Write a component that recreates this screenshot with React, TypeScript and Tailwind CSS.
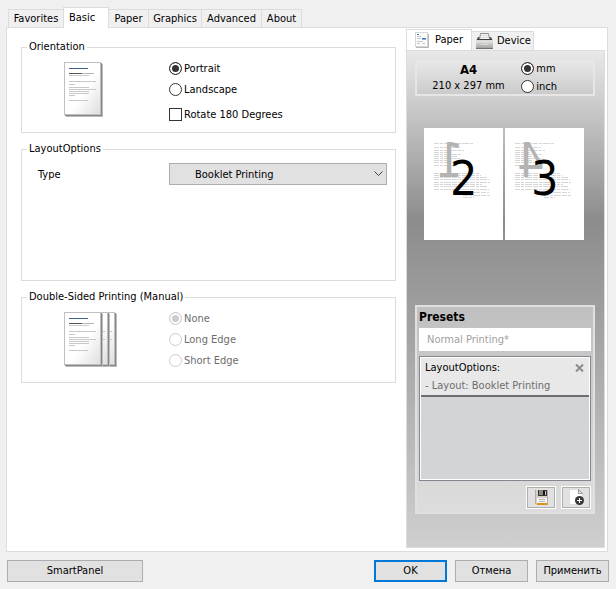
import { useState, type ReactNode } from "react";

const radioClass =
  "m-0 size-[13px] shrink-0 appearance-none rounded-full border border-[#333333] bg-white checked:bg-[#333333] checked:shadow-[inset_0_0_0_2px_white] disabled:border-[#cccccc] disabled:checked:bg-[#cccccc]";

function Radio({ name, label, checked, disabled, onChange }: {
  name: string;
  label: string;
  checked: boolean;
  disabled?: boolean;
  onChange?: () => void;
}) {
  return (
    <label className={`flex h-[21px] items-center gap-0.5 ${disabled ? "text-[#6d6d6d]" : ""}`}>
      <input type="radio" name={name} checked={checked} disabled={disabled} onChange={() => onChange?.()} className={radioClass} />
      {label}
    </label>
  );
}

function Group({ title, className, children }: { title: string; className: string; children: ReactNode }) {
  return (
    <fieldset className={`min-w-0 border border-[#dcdcdc] ${className}`}>
      <legend className="ml-[5px] px-0.5 leading-4">{title}</legend>
      {children}
    </fieldset>
  );
}

const sheetLines: [number, number][] = [
  [19, 27], [22, 6], [25, 20], [27, 27], [29, 20], [31, 20], [33, 6], [38, 19],
];

function SheetIcon({ stacked }: { stacked?: boolean }) {
  return (
    <svg width="54" height="57" viewBox="0 0 54 57" aria-hidden="true">
      <defs>
        <linearGradient id="sheet" x1="0" y1="0" x2="1" y2="1">
          <stop offset="0.55" stopColor="#ffffff" />
          <stop offset="1" stopColor="#dedede" />
        </linearGradient>
      </defs>
      {(stacked ? [14, 7, 0] : [0]).map((dx) => (
        <g key={dx}>
          <rect x={dx + 2} y="2" width="37" height="53" fill="#bdbdbd" />
          <rect x={dx + 1} y="1" width="37" height="53" fill="#858585" />
          <rect x={dx + 0.5} y="0.5" width="36" height="52" fill="url(#sheet)" stroke="#c0c0c0" />
          {dx > 0 && <path d={`M${dx + 31} 19.500h3m-3 8h3`} stroke="#c8c8c8" />}
        </g>
      ))}
      <rect x="5" y="6" width="19" height="1" fill="#3c6291" />
      <rect x="5" y="11" width="13" height="1" fill="#555555" />
      <rect x="18" y="11" width="12" height="1" fill="#b5b5b5" />
      <rect x="5" y="13" width="20" height="1" fill="#cccccc" />
      {sheetLines.map(([y, w]) => (
        <rect key={y} x="5" y={y} width={w} height="1" fill="#c8c8c8" />
      ))}
    </svg>
  );
}

function PaperIcon() {
  return (
    <svg width="14" height="16" viewBox="0 0 14 16" aria-hidden="true">
      <rect x="0.5" y="0.5" width="12" height="14" fill="#fbfbfb" stroke="#d6d6d6" />
      <path d="M13.5 2v13.5H1" fill="none" stroke="#b5b5b5" />
      <path d="M2 2.5h2M7 6.5h4" stroke="#3f78bd" />
      <path d="M2 4.5h4M2 6.5h4M2 9.5h6M2 11.5h3M7 11.5h3" stroke="#c3c8d0" />
      <path d="M7 7.5h4" stroke="#8db0da" />
    </svg>
  );
}

function PrinterIcon() {
  return (
    <svg width="17" height="16" viewBox="0 0 17 16" aria-hidden="true">
      <defs>
        <linearGradient id="printer" x1="0" y1="0" x2="0" y2="1">
          <stop offset="0" stopColor="#eeeeeb" />
          <stop offset="1" stopColor="#a3a29e" />
        </linearGradient>
      </defs>
      <path d="M2 4h13l2 4H0z" fill="#555555" />
      <path d="M4.500.500h8l1 6h-10z" fill="#f4f4f4" stroke="#8f8f8f" />
      <path d="M5 2.500h7M5 4.500h7" stroke="#dedede" />
      <path d="M1 6.500h15" stroke="#3e3e3e" />
      <rect x="0" y="7" width="17" height="8" fill="url(#printer)" />
      <path d="M0 7.500h17M5 11.500h7" stroke="#d9d9d6" />
      <path d="M0 15.500h17" stroke="#75726c" />
    </svg>
  );
}

function FloppyIcon() {
  return (
    <svg width="15" height="15" viewBox="0 0 15 15" aria-hidden="true">
      <path d="M1 0h13v15H2l-1-1z" fill="#d6cfc8" />
      <rect x="4" y="0" width="9" height="6" fill="#3a3735" />
      <rect x="5" y="0" width="4" height="5" fill="#8b8783" />
      <rect x="9" y="1" width="2" height="4" fill="#17130f" />
      <rect x="11" y="1" width="1" height="4" fill="#c9c4bf" />
      <rect x="3" y="8" width="10" height="5" fill="#f6f5f3" />
      <path d="M5 9.500h6M5 11.500h6" stroke="#bab7b3" />
      <rect x="3" y="13" width="10" height="2" fill="#d89416" />
      <path d="M1.500 0v14M13.500 0v15" stroke="#b4aca4" />
    </svg>
  );
}

function NewPresetIcon() {
  return (
    <svg width="15" height="17" viewBox="0 0 15 17" aria-hidden="true">
      <path d="M.5.5h9l4 4v11H.5z" fill="#ffffff" stroke="#dddddd" />
      <path d="M9.500.500v4h4z" fill="#eeeeee" stroke="#999999" />
      <circle cx="10.500" cy="11.500" r="4.500" fill="#383838" />
      <path d="M10.500 9v5M8 11.500h5" stroke="#ffffff" />
    </svg>
  );
}

const bodyLines: [number, number, number][] = [
  [10, 15, 39], [10, 19, 26], [10, 22, 30], [10, 24, 15], [10, 26, 28], [10, 28, 24], [10, 30, 26], [10, 32, 18], [10, 34, 27],
  [10, 37, 24], [10, 45, 45], [10, 47, 47], [10, 49, 53], [10, 51, 55], [10, 54, 56], [10, 56, 48], [10, 58, 54], [10, 61, 55],
  [39, 64, 26], [39, 67, 28], [39, 69, 11],
];

function PreviewPage({ back, front }: { back: string; front: string }) {
  return (
    <div className="relative h-28 w-[79px] bg-white">
      <svg width="79" height="112" viewBox="0 0 79 112" aria-hidden="true">
        {bodyLines.map(([x, y, w]) => (
          <path key={y} d={`M${x} ${y + 0.5}h${w}`} stroke="#d6d6d6" strokeDasharray="5 1 3 1 7 1" />
        ))}
      </svg>
      <span className="absolute left-3 top-1.5 -scale-x-100 text-5xl leading-[52px] text-[#b3b3b3]">{back}</span>
      <span className="absolute left-[26px] top-6 text-5xl leading-[52px] text-black">{front}</span>
    </div>
  );
}

const tabs = [
  { name: "Favorites", width: "w-[55px]" },
  { name: "Basic", width: "w-[46px]" },
  { name: "Paper", width: "w-10" },
  { name: "Graphics", width: "w-[53px]" },
  { name: "Advanced", width: "w-[60px]" },
  { name: "About", width: "w-10" },
];

const pushButton = "h-[22px] border border-[#adadad] bg-[#e1e1e1] text-center";

export default function App() {
  const [orientation, setOrientation] = useState("Portrait");
  const [unit, setUnit] = useState("mm");
  return (
    <main className="flex min-h-screen flex-col bg-[#f0f0f0] px-1.5 pt-[7px] font-['DejaVu_Sans_Condensed','DejaVu_Sans',sans-serif] text-[11px] leading-[14px] text-black">
      <div role="tablist" className="flex items-end pl-0.5">
        {tabs.map(({ name, width }) =>
          name === "Basic" ? (
            <button key={name} role="tab" aria-selected="true" className={`z-10 -mb-px h-[21px] border border-b-0 border-[#dcdcdc] bg-white pr-2 ${width}`}>
              {name}
            </button>
          ) : (
            <button key={name} role="tab" aria-selected="false" className={`h-[18px] whitespace-nowrap border border-b-0 border-l-0 border-[#dcdcdc] first:border-l first:border-r-0 ${width}`}>
              {name}
            </button>
          ),
        )}
      </div>

      <section className="mr-0.5 flex border border-[#dcdcdc] bg-white">
        <div className="flex flex-1 flex-col gap-2 pl-3.5 pr-2.5 pt-[11px]">
          <Group title="Orientation" className="pb-[7px]">
            <div className="grid grid-cols-[105px_1fr] pl-[42px] pt-[3px]">
              <div className="pt-1">
                <SheetIcon />
              </div>
              <div>
                <Radio name="orientation" label="Portrait" checked={orientation === "Portrait"} onChange={() => setOrientation("Portrait")} />
                <Radio name="orientation" label="Landscape" checked={orientation === "Landscape"} onChange={() => setOrientation("Landscape")} />
                <label className="mt-1 flex h-[21px] items-center gap-0.5">
                  <input type="checkbox" className="size-[13px] appearance-none border border-[#333333] bg-white checked:bg-[#333333] checked:shadow-[inset_0_0_0_2px_white]" />
                  Rotate 180 Degrees
                </label>
              </div>
            </div>
          </Group>

          <Group title="LayoutOptions" className="min-h-[140px]">
            <div className="flex items-center pl-4 pr-2 pt-1.5">
              <label htmlFor="type" className="w-[131px] pt-0.5">Type</label>
              <div className="relative flex-1">
                <select id="type" className="h-[22px] w-full appearance-none border border-[#adadad] bg-[#e1e1e1] pl-[25px] pt-0.5">
                  <option>Booklet Printing</option>
                </select>
                <svg className="pointer-events-none absolute right-1 top-2" width="9" height="6" viewBox="0 0 9 6" aria-hidden="true">
                  <path d="M.5.5l4 4 4-4" fill="none" stroke="#444444" />
                </svg>
              </div>
            </div>
          </Group>

          <Group title="Double-Sided Printing (Manual)" className="pb-[11px]">
            <div className="grid grid-cols-[105px_1fr] pl-[42px] pt-[3px]">
              <div className="pt-1">
                <SheetIcon stacked />
              </div>
              <div>
                <Radio name="duplex" label="None" checked disabled />
                <Radio name="duplex" label="Long Edge" checked={false} disabled />
                <Radio name="duplex" label="Short Edge" checked={false} disabled />
              </div>
            </div>
          </Group>
        </div>

        <aside className="mr-0.5 w-[199px] pb-[3px] pt-px">
          <div role="tablist" className="flex items-end">
            <button role="tab" aria-selected="true" className="flex h-[21px] w-[66px] items-center gap-1.5 border border-b-0 border-[#dcdcdc] bg-white pl-2">
              <PaperIcon />
              Paper
            </button>
            <button role="tab" aria-selected="false" className="flex h-[19px] w-[62px] items-center gap-1 border border-b-0 border-l-0 border-[#dcdcdc] bg-[#f0f0f0] pl-1">
              <PrinterIcon />
              Device
            </button>
          </div>
          <div className="border border-[#dcdcdc] bg-[linear-gradient(#e8e8e8,#8c8c8c_34%,#cfcfcf)] pb-[33px] pl-2 pr-[9px] pt-2">
            <div className="flex justify-between border-2 border-[#e6e6e6] bg-[linear-gradient(#e8e8e8,#cbcbcb)] pr-9">
              <div className="flex w-[103px] flex-col items-center">
                <b className="text-[13px] leading-[17px]">A4</b>
                <span className="leading-4">210 x 297 mm</span>
              </div>
              <div className="-my-0.5 flex flex-col justify-center leading-[18px]">
                {["mm", "inch"].map((u) => (
                  <label key={u} className="flex h-[18px] items-center gap-0.5">
                    <input type="radio" name="unit" checked={unit === u} onChange={() => setUnit(u)} className={radioClass} />
                    {u}
                  </label>
                ))}
              </div>
            </div>

            <div className="mt-8 flex gap-0.5 pl-[9px]">
              <PreviewPage back="1" front="2" />
              <PreviewPage back="4" front="3" />
            </div>

            <div className="mt-[65px] border-2 border-[#e0e0e0] bg-[linear-gradient(#c0c0c0,#dddddd)] px-0.5 pb-[3px] pt-0.5">
              <label htmlFor="preset" className="block text-xs font-bold leading-4">Presets</label>
              <input id="preset" defaultValue="Normal Printing*" className="mt-[3px] h-[23px] w-full bg-white px-2 text-[#a0a0a0]" />
              <div className="mt-[5px] h-[125px] border border-[#828790] bg-[#d3d4d6]">
                <div className="flex h-full flex-col border border-white">
                  <div className="border-b-2 border-[#6e6e72] bg-[#e8e8e8] px-1 pb-px">
                    <div className="flex items-center justify-between leading-5">
                      LayoutOptions:
                      <button aria-label="Remove LayoutOptions" className="pr-px">
                        <svg width="9" height="8" viewBox="0 0 9 8" aria-hidden="true">
                          <path d="M1 .5l7 7M8 .5l-7 7" stroke="#8c8c8c" strokeWidth="2" />
                        </svg>
                      </button>
                    </div>
                    <div className="leading-4 text-[#6d6d6d]">- Layout: Booklet Printing</div>
                  </div>
                </div>
              </div>
              <div className="mt-[5px] flex justify-end gap-[5px]">
                {[
                  { label: "Save preset", icon: <FloppyIcon /> },
                  { label: "New preset", icon: <NewPresetIcon /> },
                ].map(({ label, icon }) => (
                  <button key={label} aria-label={label} className="flex h-[23px] w-[30px] items-center justify-center border border-white bg-[#e1e1e1] outline -outline-offset-2 outline-[#adadad]">
                    {icon}
                  </button>
                ))}
              </div>
            </div>
          </div>
        </aside>
      </section>

      <footer className="flex gap-2 py-2 pl-px pr-px">
        <button className={`mr-auto w-[136px] ${pushButton}`}>SmartPanel</button>
        <button className="h-[22px] w-[73px] border-2 border-[#0078d7] bg-[#e1e1e1]">OK</button>
        <button className={`w-[73px] ${pushButton}`}>Отмена</button>
        <button className={`w-[73px] ${pushButton}`}>Применить</button>
      </footer>
    </main>
  );
}
